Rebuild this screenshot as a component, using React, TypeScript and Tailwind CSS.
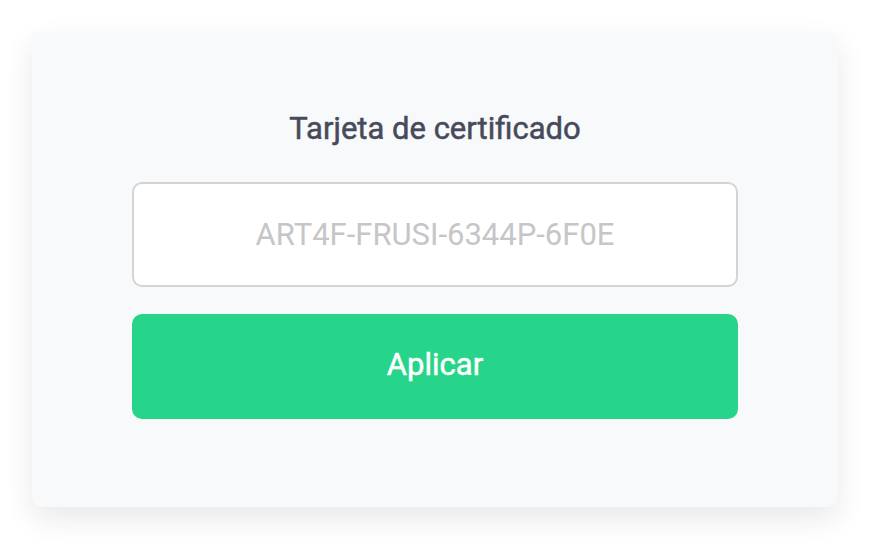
export default function App() {
  return (
    <div className="min-h-[556px] w-full bg-white pt-8 pl-8 font-['Roboto',sans-serif]">
      <div className="flex h-[475px] w-[806px] flex-col items-center rounded-[10px] rounded-tl-none bg-[#f8f9fb] pt-[80px] shadow-[0_12px_30px_rgba(0,0,0,0.09)]">
        <h1 className="text-[31px] leading-[34px] font-normal text-[#464a5a] [-webkit-text-stroke:0.5px_#464a5a]">
          Tarjeta de certificado
        </h1>
        <input
          type="text"
          placeholder="ART4F-FRUSI-6344P-6F0E"
          className="mt-[36px] h-[105px] w-[606px] rounded-[10px] border-2 border-[#d4d4d6] bg-white text-center text-[31px] text-[#333] outline-none placeholder:text-[#c6c6c8]"
        />
        <button className="mt-[27px] h-[105px] w-[606px] rounded-[10px] bg-[#27d58a] pb-[2px] text-[31px] font-normal text-white [-webkit-text-stroke:0.5px_#ffffff]">
          Aplicar
        </button>
      </div>
    </div>
  );
}
